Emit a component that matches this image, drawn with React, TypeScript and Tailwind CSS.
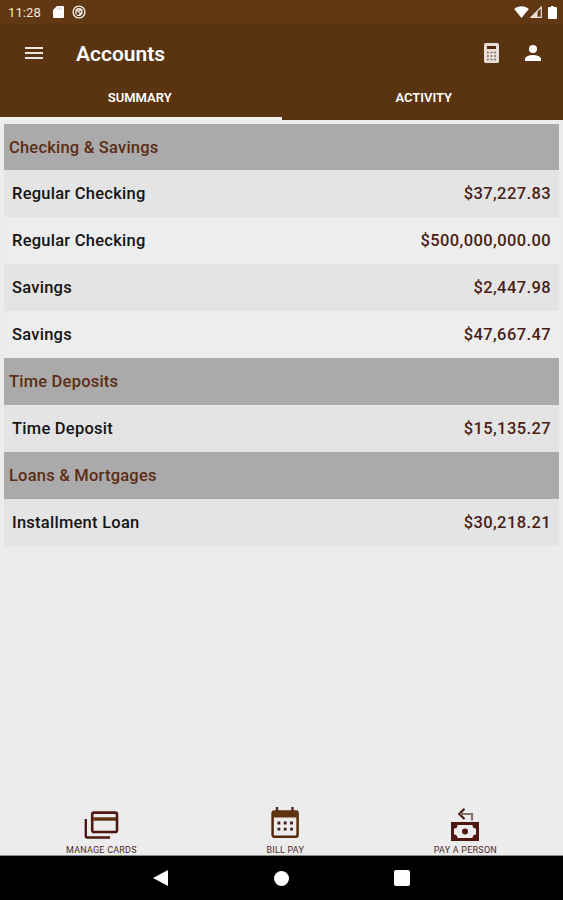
import React, { useState } from 'react';
import clsx from 'clsx';

type Account = { name: string; balance: string };
type AccountGroup = { title: string; accounts: Account[] };

const groups: AccountGroup[] = [
  {
    title: 'Checking & Savings',
    accounts: [
      { name: 'Regular Checking', balance: '$37,227.83' },
      { name: 'Regular Checking', balance: '$500,000,000.00' },
      { name: 'Savings', balance: '$2,447.98' },
      { name: 'Savings', balance: '$47,667.47' },
    ],
  },
  { title: 'Time Deposits', accounts: [{ name: 'Time Deposit', balance: '$15,135.27' }] },
  { title: 'Loans & Mortgages', accounts: [{ name: 'Installment Loan', balance: '$30,218.21' }] },
];

function StatusBar() {
  return (
    <div className="flex h-6 items-center justify-between bg-[#603813] pl-2 pr-[6px] text-white">
      <div className="flex items-center">
        <span className="w-[45px] pt-px text-[13px] leading-[23px] tracking-[0.1px] text-[#efe6df]">11:28</span>
        <svg className="h-3 w-[11px]" viewBox="0 0 11 12" fill="#fff">
          <path d="M4 0h6a1 1 0 0 1 1 1v10a1 1 0 0 1-1 1H1a1 1 0 0 1-1-1V4z" />
          <path d="M4.5 1.5v2M6.5 1.5v2M8.5 1.5v2" stroke="#b9a596" strokeWidth=".6" />
        </svg>
        <svg className="ml-2 h-[14px] w-[14px]" viewBox="0 0 14 14" fill="none" stroke="#f1e9e3">
          <circle cx="7" cy="7" r="5.9" strokeWidth="1.4" />
          <path d="M4 9.6V6.4A3 3 0 1 1 7 9.8M4.3 4.4l5.4 5M7 5.2h2M5 10.4h3.6" strokeWidth="1.4" />
        </svg>
      </div>
      <div className="flex items-center">
        <svg className="h-3 w-[15px]" viewBox="0 0 15 12" fill="#fff">
          <path d="M7.5 12 .2 3C4.2-.8 10.8-.8 14.8 3z" />
        </svg>
        <svg className="ml-px h-3 w-3" viewBox="0 0 12 12">
          <path d="M11.3 1v10.3H1z" fill="none" stroke="#e9dfd8" strokeWidth="1.2" />
          <path d="M1 11.5 7.5 5v6.5z" fill="#e9dfd8" />
        </svg>
        <svg className="ml-[6px] h-[13px] w-[9px]" viewBox="0 0 9 13" fill="#fff">
          <path d="M3 0h3v1h2a1 1 0 0 1 1 1v10a1 1 0 0 1-1 1H1a1 1 0 0 1-1-1V2a1 1 0 0 1 1-1h2z" />
        </svg>
      </div>
    </div>
  );
}

function CalculatorIcon() {
  return (
    <svg className="h-5 w-[15px]" viewBox="0 0 15 20">
      <rect width="15" height="20" rx="1.7" fill="#e9dfda" />
      <path d="M3 3h9v3H3z" fill="#54290f" />
      <path d="M3 9.5h9M3 13h9M3 16.5h9" stroke="#7f5f4e" strokeWidth="1.6" strokeDasharray="1.8" />
    </svg>
  );
}

function CardsIcon() {
  return (
    <svg className="h-7 w-[35px]" viewBox="0 0 35 28" fill="none" stroke="#4d1712" strokeWidth="2.6">
      <rect x="8.2" y="1.6" width="24.8" height="19.4" rx="1.8" />
      <path d="M9.2 8h22.8" stroke="#5c3011" strokeWidth="3.4" />
      <path d="M1.8 8v17q0 1.5 1.5 1.5H26" strokeWidth="2.4" />
    </svg>
  );
}

function CalendarIcon() {
  return (
    <svg className="h-8 w-7" viewBox="0 0 28 32">
      <path d="M6 0v5M21.5 0v5" stroke="#4d2418" strokeWidth="2.4" />
      <rect x="1.6" y="4.8" width="25" height="25" rx="2" fill="none" stroke="#56290f" strokeWidth="2.5" />
      <path d="M1.5 3.5h25.500v7H1.500z" fill="#603311" />
      <path d="M6.5 16h15.5M6.5 22.2h15.5" stroke="#4a1717" strokeWidth="2.8" strokeDasharray="2.8 3.500" />
    </svg>
  );
}

function PayPersonIcon() {
  return (
    <svg className="h-[33px] w-7" viewBox="0 0 28 33" fill="none">
      <path d="M13.5.8 8.3 6l5.200 5" stroke="#4d1712" strokeWidth="2.2" />
      <path d="M9 6h12v6.5" stroke="#85706a" strokeWidth="2.2" />
      <path d="M0 14h28v19H0z" fill="#4d1712" />
      <path d="M6.5 17h15a3.500 3.500 0 0 0 3.500 3.500v6a3.500 3.500 0 0 0-3.500 3.500h-15A3.500 3.500 0 0 0 3 26.500v-6A3.500 3.500 0 0 0 6.500 17z" fill="#ececec" />
      <circle cx="14" cy="23.5" r="3" fill="#4d1712" />
    </svg>
  );
}

export default function App() {
  const [tab, setTab] = useState('SUMMARY');

  return (
    <div className="flex h-[900px] w-[563px] flex-col overflow-hidden bg-[#ececec] font-['Roboto',sans-serif]">
      <StatusBar />
      <header className="flex h-24 shrink-0 flex-col bg-[#5a3310] text-white">
        <div className="flex h-[57px] items-center pl-[25px] pr-[22px]">
          <button aria-label="Menu" className="flex w-[18px] flex-col gap-[3px] pt-px">
            <span className="h-[2px] bg-[#eee6e2]" />
            <span className="h-[2px] bg-[#eee6e2]" />
            <span className="h-[2px] bg-[#eee6e2]" />
          </button>
          <h1 className="ml-[33px] flex-1 pt-[3px] text-[21px] font-semibold leading-6">Accounts</h1>
          <CalculatorIcon />
          <svg className="ml-[26px] h-4 w-4" viewBox="0 0 16 16" fill="#fff">
            <circle cx="8" cy="4" r="4" />
            <path d="M0 16v-2c0-2.7 5-4 8-4s8 1.3 8 4v2z" />
          </svg>
        </div>
        <nav className="flex flex-1">
          {['SUMMARY', 'ACTIVITY'].map(t => (
            <button
              key={t}
              onClick={() => setTab(t)}
              className={clsx(
                'flex w-1/2 items-start justify-center border-[#f3f2f1] pt-[9px] text-[13px] font-semibold leading-4',
                tab === t ? 'border-b-[3px] pr-[2px]' : 'pl-[3px]'
              )}
            >
              {t}
            </button>
          ))}
        </nav>
      </header>

      <main className="flex-1 px-1 pt-[3.5px] text-[16.5px] font-medium">
        {groups.map(group => (
          <section key={group.title}>
            <h2 className="flex h-[46.9px] items-center bg-[#aaaaaa] pl-[5px] pt-[2px] tracking-[0.21px] text-[#5c2d14]">
              {group.title}
            </h2>
            {group.accounts.map((account, i) => (
              <div
                key={i}
                className={clsx(
                  'flex h-[46.9px] items-center justify-between px-2 pt-[2px]',
                  i % 2 === 0 ? 'bg-[#e4e4e4]' : 'bg-[#ededed]'
                )}
              >
                <span className="tracking-[0.25px] text-[#141414]">{account.name}</span>
                <span className="tracking-[0.4px] text-[#4a1d14]">{account.balance}</span>
              </div>
            ))}
          </section>
        ))}
      </main>

      <div className="flex h-12 items-end justify-between px-[66px] text-[9px] leading-[10px] tracking-[0.22px] text-[#4a2a24]">
        <button className="flex flex-col items-center gap-[6px]">
          <CardsIcon />
          <span>MANAGE CARDS</span>
        </button>
        <button className="flex flex-col items-center gap-[6px]">
          <CalendarIcon />
          <span>BILL PAY</span>
        </button>
        <button className="flex flex-col items-center gap-1">
          <PayPersonIcon />
          <span>PAY A PERSON</span>
        </button>
      </div>

      <div className="flex h-[45px] items-center border-t border-[#8a8a8a] bg-black pl-[153px]">
        <svg className="h-4 w-[15px]" viewBox="0 0 15 16" fill="#fff">
          <path d="M15 0v16L0 8z" />
        </svg>
        <span className="ml-[106px] h-[15px] w-[15px] rounded-full bg-white" />
        <span className="ml-[105px] h-4 w-4 rounded-[2px] bg-white" />
      </div>
    </div>
  );
}
